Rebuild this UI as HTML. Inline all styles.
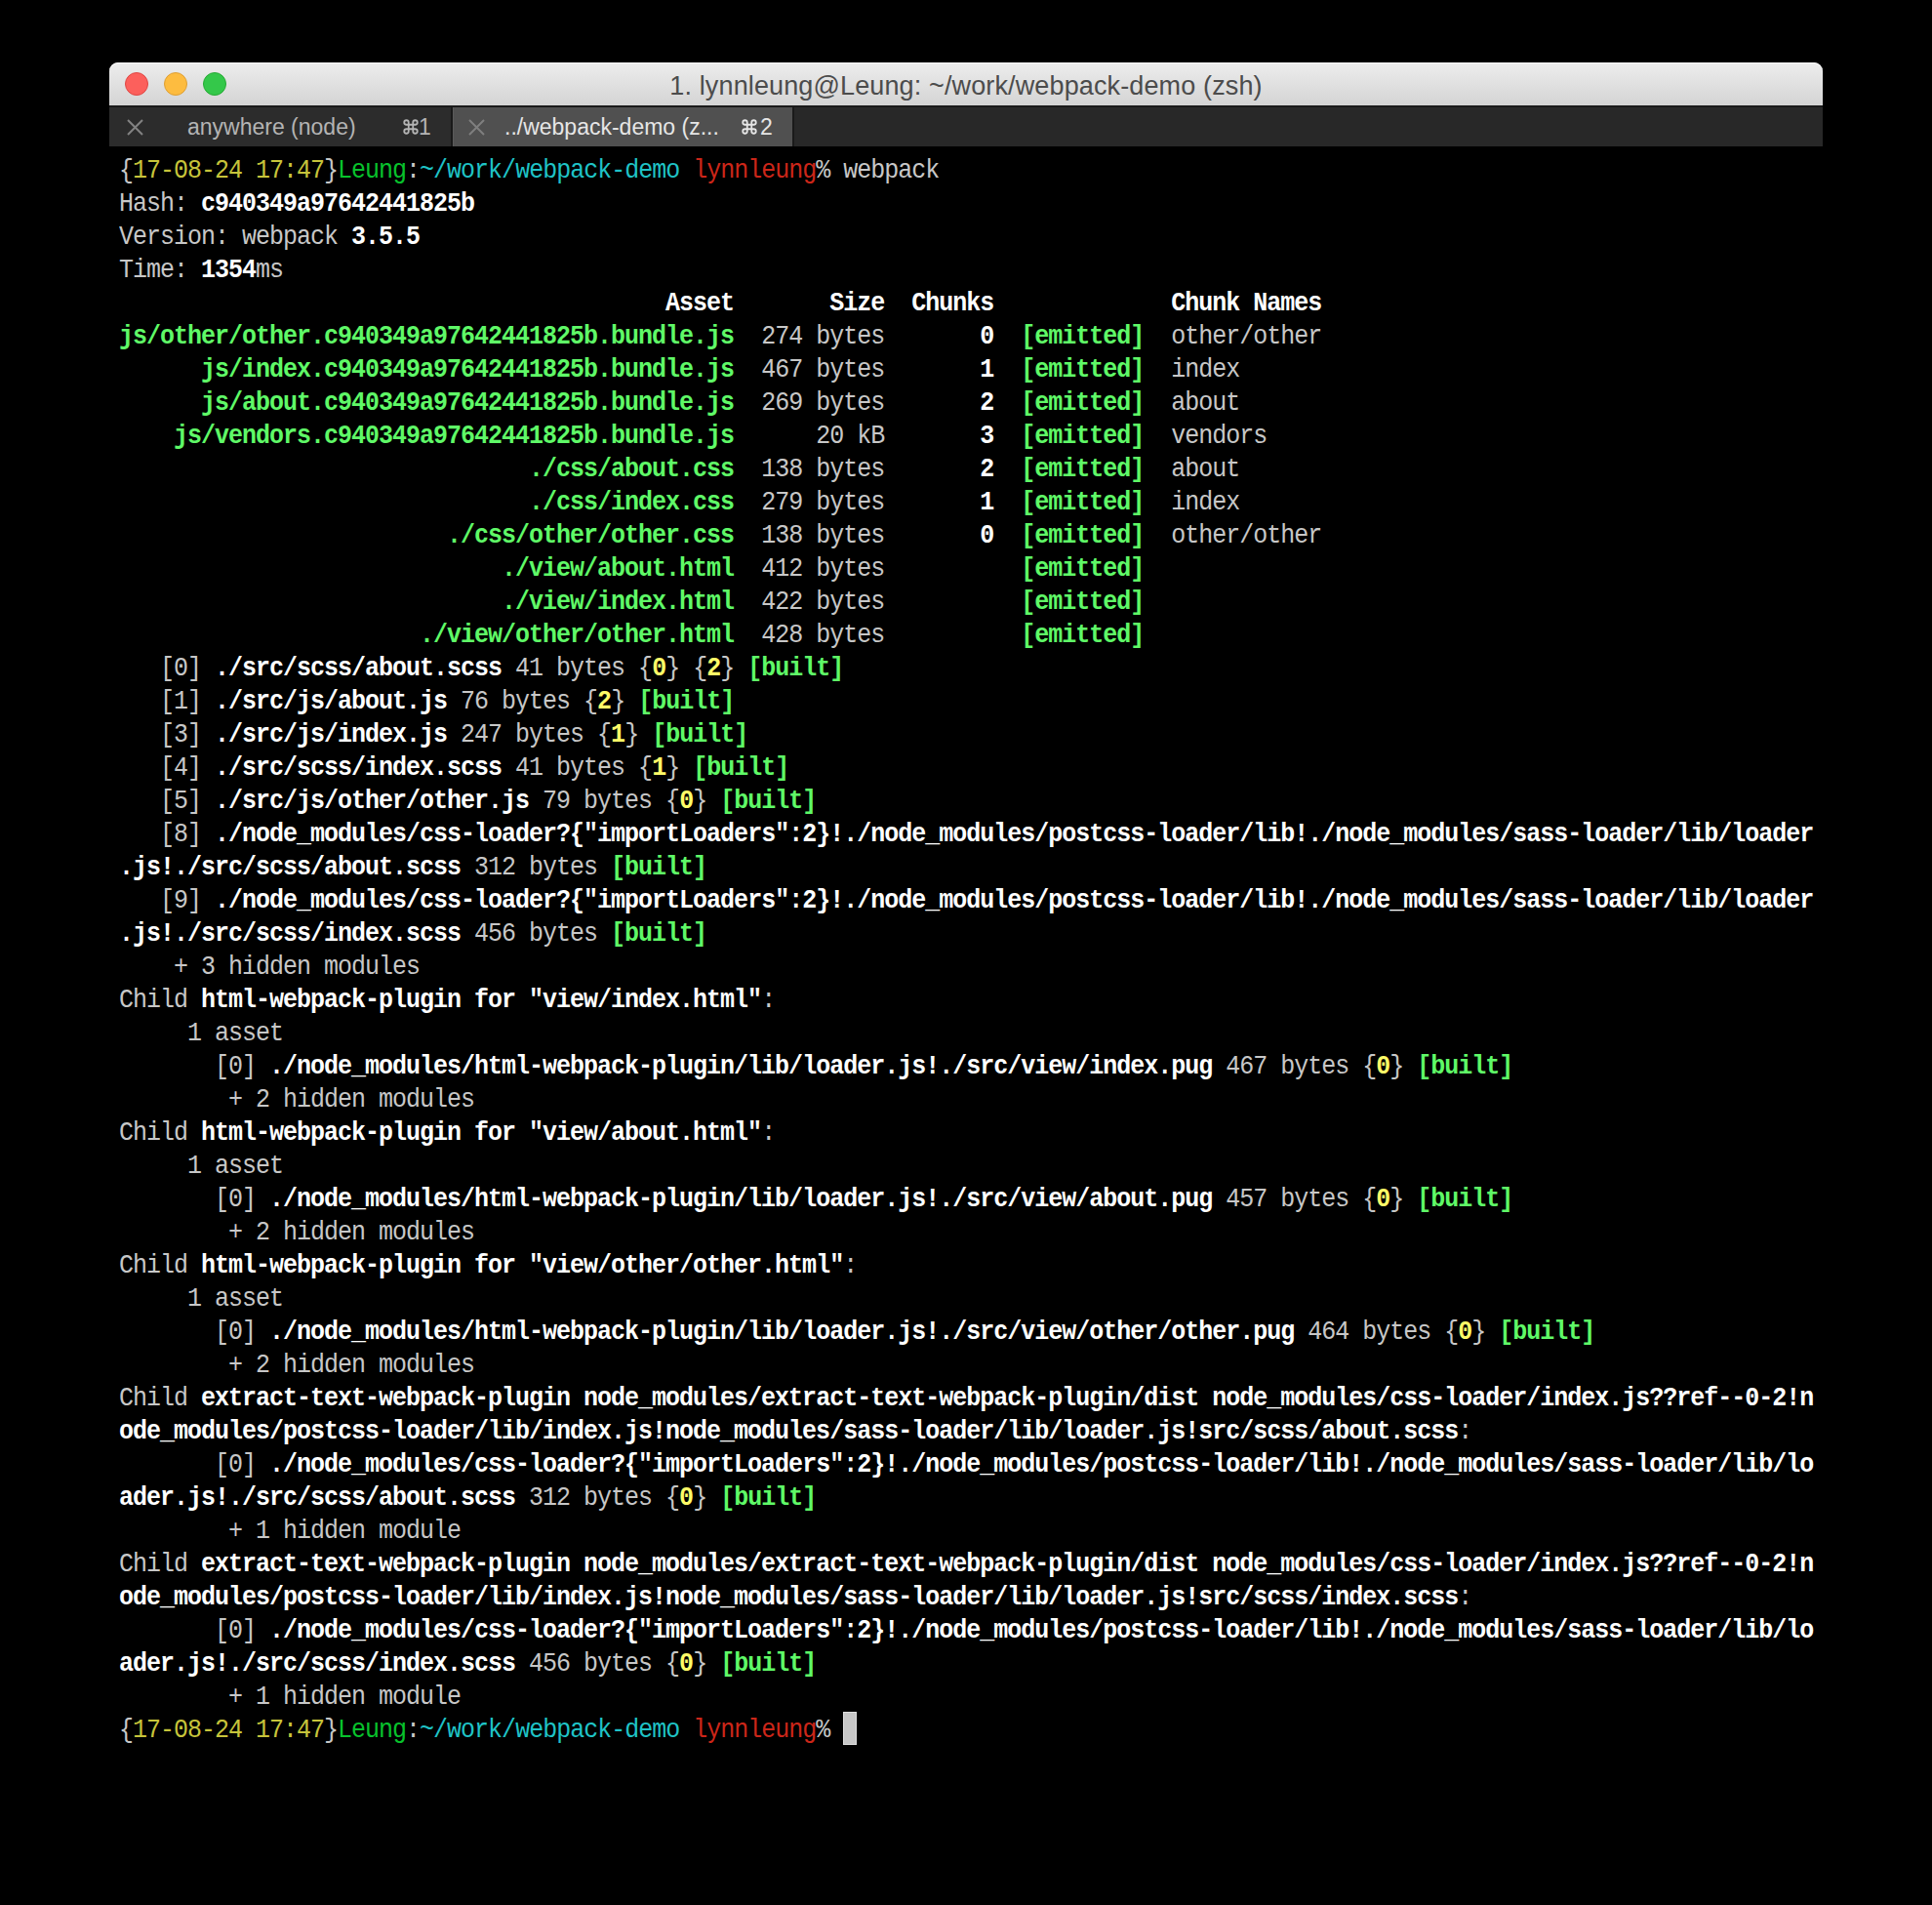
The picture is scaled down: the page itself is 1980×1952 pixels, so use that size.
<!DOCTYPE html>
<html><head><meta charset="utf-8">
<style>
html,body{margin:0;padding:0;background:#000;width:1980px;height:1952px;overflow:hidden;}
#win{position:absolute;left:112px;top:64px;width:1756px;height:86px;}
#title{position:absolute;left:0;top:0;width:1756px;height:44px;border-radius:9px 9px 0 0;
 background:linear-gradient(#ededed,#d4d4d4);box-shadow:inset 0 1px 0 #fafafa;}
#title .t{position:absolute;left:0;right:0;top:0;height:44px;line-height:44px;text-align:center;
 font-family:"Liberation Sans",sans-serif;font-size:27px;color:#4c4c4c;padding-top:2px;letter-spacing:0.13px;}
.tl{position:absolute;top:10px;width:24px;height:24px;border-radius:50%;box-sizing:border-box;}
#tabs{position:absolute;left:0;top:44px;width:1756px;height:42px;background:#1a1a1a;}
.tab{position:absolute;top:2px;height:40px;font-family:"Liberation Sans",sans-serif;font-size:23px;line-height:40px;overflow:hidden}
.tab span{position:absolute;top:0;white-space:pre}
.tab svg{position:absolute}
#term{position:absolute;left:122px;top:159px;width:1740px;}
.ln{position:absolute;left:0;height:34px;line-height:34px;white-space:pre;font-family:"Liberation Mono",monospace;
 font-size:25px;letter-spacing:-1px;color:#c7c7c7;transform:scaleY(1.07);transform-origin:0 23.6px;}
.B{color:#feffff;font-weight:bold}
.G{color:#5ff967;font-weight:bold}
.Y{color:#fefb67;font-weight:bold}
.y{color:#c7c43a}
.g{color:#08c22c}
.c{color:#1fc3c6}
.r{color:#cc2619}
#cursor{position:absolute;left:864px;top:1754px;width:14px;height:34px;background:#c7c7c7;box-shadow:inset 0 0 0 1px #dedede}
</style></head><body>
<div id="win">
 <div id="title">
  <div class="tl" style="left:16px;background:#fc605c;border:1px solid #df4744"></div>
  <div class="tl" style="left:56px;background:#fdbc40;border:1px solid #de9f34"></div>
  <div class="tl" style="left:96px;background:#34c84a;border:1px solid #27aa35"></div>
  <div class="t">1. lynnleung@Leung: ~/work/webpack-demo (zsh)</div>
 </div>
 <div id="tabs">
  <div class="tab" style="left:0;width:350px;background:#2c2c2c;color:#b4b4b4">
   <svg style="left:18px;top:12px" width="17" height="17" viewBox="0 0 17 17"><path d="M1 1L16 16M16 1L1 16" stroke="#828282" stroke-width="2"/></svg>
   <span style="left:80px">anywhere (node)</span>
   <svg style="left:300px;top:11px" width="18" height="18" viewBox="0 0 24 24"><path d="M9 6V18A3 3 0 1 1 6 15H18A3 3 0 1 1 15 18V6A3 3 0 1 1 18 9H6A3 3 0 1 1 9 6Z" fill="none" stroke="#b4b4b4" stroke-width="2.4"/></svg>
   <span style="left:317px">1</span>
  </div>
  <div class="tab" style="left:352px;width:348px;background:#505050;color:#e6e6e6;box-shadow:inset 1px 0 0 #5a5a5a">
   <svg style="left:16px;top:12px" width="17" height="17" viewBox="0 0 17 17"><path d="M1 1L16 16M16 1L1 16" stroke="#7f7f7f" stroke-width="2"/></svg>
   <span style="left:53px">../webpack-demo (z...</span>
   <svg style="left:295px;top:11px" width="18" height="18" viewBox="0 0 24 24"><path d="M9 6V18A3 3 0 1 1 6 15H18A3 3 0 1 1 15 18V6A3 3 0 1 1 18 9H6A3 3 0 1 1 9 6Z" fill="none" stroke="#e6e6e6" stroke-width="2.4"/></svg>
   <span style="left:315px">2</span>
  </div>
  <div class="tab" style="left:702px;width:1054px;background:#282828;"></div>
 </div>
</div>
<div id="term">
<div class="ln" style="top:0px">{<span class="y">17-08-24 17:47</span>}<span class="g">Leung</span>:<span class="c">~/work/webpack-demo</span> <span class="r">lynnleung</span>% webpack</div>
<div class="ln" style="top:34px">Hash: <span class="B">c940349a97642441825b</span></div>
<div class="ln" style="top:68px">Version: webpack <span class="B">3.5.5</span></div>
<div class="ln" style="top:102px">Time: <span class="B">1354</span>ms</div>
<div class="ln" style="top:136px"><span class="B">                                        Asset       Size  Chunks             Chunk Names</span></div>
<div class="ln" style="top:170px"><span class="G">js/other/other.c940349a97642441825b.bundle.js</span>  274 bytes<span class="B">       0</span>  <span class="G">[emitted]</span>  other/other</div>
<div class="ln" style="top:204px">      <span class="G">js/index.c940349a97642441825b.bundle.js</span>  467 bytes<span class="B">       1</span>  <span class="G">[emitted]</span>  index</div>
<div class="ln" style="top:238px">      <span class="G">js/about.c940349a97642441825b.bundle.js</span>  269 bytes<span class="B">       2</span>  <span class="G">[emitted]</span>  about</div>
<div class="ln" style="top:272px">    <span class="G">js/vendors.c940349a97642441825b.bundle.js</span>      20 kB<span class="B">       3</span>  <span class="G">[emitted]</span>  vendors</div>
<div class="ln" style="top:306px">                              <span class="G">./css/about.css</span>  138 bytes<span class="B">       2</span>  <span class="G">[emitted]</span>  about</div>
<div class="ln" style="top:340px">                              <span class="G">./css/index.css</span>  279 bytes<span class="B">       1</span>  <span class="G">[emitted]</span>  index</div>
<div class="ln" style="top:374px">                        <span class="G">./css/other/other.css</span>  138 bytes<span class="B">       0</span>  <span class="G">[emitted]</span>  other/other</div>
<div class="ln" style="top:408px">                            <span class="G">./view/about.html</span>  412 bytes<span class="B">        </span>  <span class="G">[emitted]</span></div>
<div class="ln" style="top:442px">                            <span class="G">./view/index.html</span>  422 bytes<span class="B">        </span>  <span class="G">[emitted]</span></div>
<div class="ln" style="top:476px">                      <span class="G">./view/other/other.html</span>  428 bytes<span class="B">        </span>  <span class="G">[emitted]</span></div>
<div class="ln" style="top:510px">   [0] <span class="B">./src/scss/about.scss</span> 41 bytes {<span class="Y">0</span>} {<span class="Y">2</span>} <span class="G">[built]</span></div>
<div class="ln" style="top:544px">   [1] <span class="B">./src/js/about.js</span> 76 bytes {<span class="Y">2</span>} <span class="G">[built]</span></div>
<div class="ln" style="top:578px">   [3] <span class="B">./src/js/index.js</span> 247 bytes {<span class="Y">1</span>} <span class="G">[built]</span></div>
<div class="ln" style="top:612px">   [4] <span class="B">./src/scss/index.scss</span> 41 bytes {<span class="Y">1</span>} <span class="G">[built]</span></div>
<div class="ln" style="top:646px">   [5] <span class="B">./src/js/other/other.js</span> 79 bytes {<span class="Y">0</span>} <span class="G">[built]</span></div>
<div class="ln" style="top:680px">   [8] <span class="B">./node_modules/css-loader?{"importLoaders":2}!./node_modules/postcss-loader/lib!./node_modules/sass-loader/lib/loader</span></div>
<div class="ln" style="top:714px"><span class="B">.js!./src/scss/about.scss</span> 312 bytes <span class="G">[built]</span></div>
<div class="ln" style="top:748px">   [9] <span class="B">./node_modules/css-loader?{"importLoaders":2}!./node_modules/postcss-loader/lib!./node_modules/sass-loader/lib/loader</span></div>
<div class="ln" style="top:782px"><span class="B">.js!./src/scss/index.scss</span> 456 bytes <span class="G">[built]</span></div>
<div class="ln" style="top:816px">    + 3 hidden modules</div>
<div class="ln" style="top:850px">Child <span class="B">html-webpack-plugin for "view/index.html"</span>:</div>
<div class="ln" style="top:884px">     1 asset</div>
<div class="ln" style="top:918px">       [0] <span class="B">./node_modules/html-webpack-plugin/lib/loader.js!./src/view/index.pug</span> 467 bytes {<span class="Y">0</span>} <span class="G">[built]</span></div>
<div class="ln" style="top:952px">        + 2 hidden modules</div>
<div class="ln" style="top:986px">Child <span class="B">html-webpack-plugin for "view/about.html"</span>:</div>
<div class="ln" style="top:1020px">     1 asset</div>
<div class="ln" style="top:1054px">       [0] <span class="B">./node_modules/html-webpack-plugin/lib/loader.js!./src/view/about.pug</span> 457 bytes {<span class="Y">0</span>} <span class="G">[built]</span></div>
<div class="ln" style="top:1088px">        + 2 hidden modules</div>
<div class="ln" style="top:1122px">Child <span class="B">html-webpack-plugin for "view/other/other.html"</span>:</div>
<div class="ln" style="top:1156px">     1 asset</div>
<div class="ln" style="top:1190px">       [0] <span class="B">./node_modules/html-webpack-plugin/lib/loader.js!./src/view/other/other.pug</span> 464 bytes {<span class="Y">0</span>} <span class="G">[built]</span></div>
<div class="ln" style="top:1224px">        + 2 hidden modules</div>
<div class="ln" style="top:1258px">Child <span class="B">extract-text-webpack-plugin node_modules/extract-text-webpack-plugin/dist node_modules/css-loader/index.js??ref--0-2!n</span></div>
<div class="ln" style="top:1292px"><span class="B">ode_modules/postcss-loader/lib/index.js!node_modules/sass-loader/lib/loader.js!src/scss/about.scss</span>:</div>
<div class="ln" style="top:1326px">       [0] <span class="B">./node_modules/css-loader?{"importLoaders":2}!./node_modules/postcss-loader/lib!./node_modules/sass-loader/lib/lo</span></div>
<div class="ln" style="top:1360px"><span class="B">ader.js!./src/scss/about.scss</span> 312 bytes {<span class="Y">0</span>} <span class="G">[built]</span></div>
<div class="ln" style="top:1394px">        + 1 hidden module</div>
<div class="ln" style="top:1428px">Child <span class="B">extract-text-webpack-plugin node_modules/extract-text-webpack-plugin/dist node_modules/css-loader/index.js??ref--0-2!n</span></div>
<div class="ln" style="top:1462px"><span class="B">ode_modules/postcss-loader/lib/index.js!node_modules/sass-loader/lib/loader.js!src/scss/index.scss</span>:</div>
<div class="ln" style="top:1496px">       [0] <span class="B">./node_modules/css-loader?{"importLoaders":2}!./node_modules/postcss-loader/lib!./node_modules/sass-loader/lib/lo</span></div>
<div class="ln" style="top:1530px"><span class="B">ader.js!./src/scss/index.scss</span> 456 bytes {<span class="Y">0</span>} <span class="G">[built]</span></div>
<div class="ln" style="top:1564px">        + 1 hidden module</div>
<div class="ln" style="top:1598px">{<span class="y">17-08-24 17:47</span>}<span class="g">Leung</span>:<span class="c">~/work/webpack-demo</span> <span class="r">lynnleung</span>% </div>
</div>
<div id="cursor"></div>
</body></html>
